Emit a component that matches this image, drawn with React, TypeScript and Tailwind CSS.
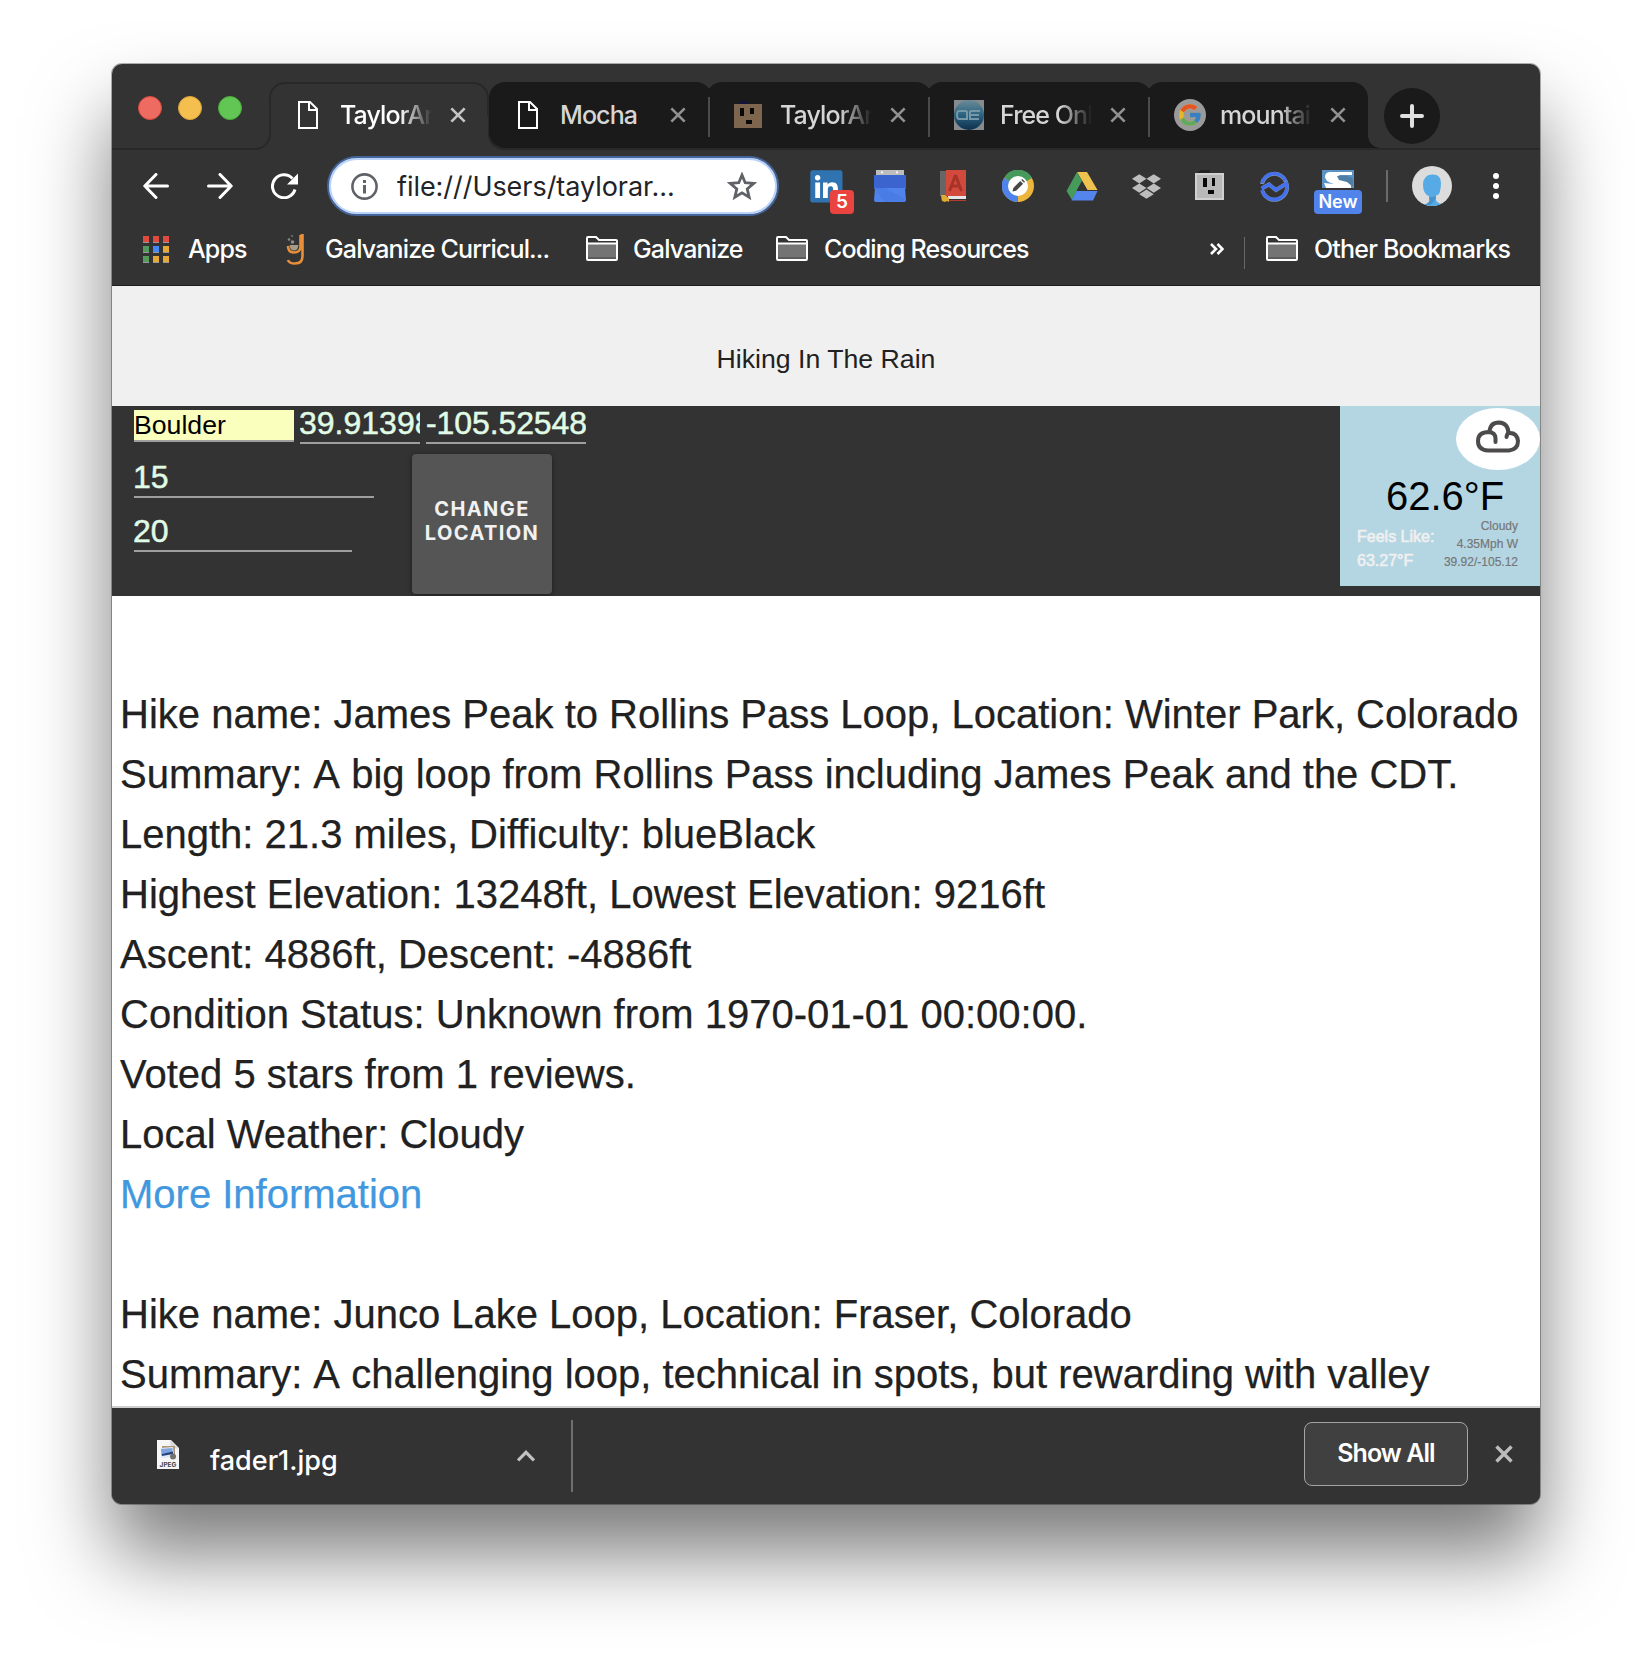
import React from "react";
import { FcGoogle } from "react-icons/fc";
import { FaDropbox, FaLinkedin } from "react-icons/fa";

function Cross({ size, color, w = 3.4 }: { size: number; color: string; w?: number }) {
  return (
    <svg width={size} height={size} viewBox="0 0 18 18" fill="none" stroke={color} strokeWidth={w}>
      <path d="M1.5 1.5 16.5 16.5M16.5 1.5 1.5 16.5" />
    </svg>
  );
}

function DocIcon() {
  return (
    <svg className="ml-1" width="20" height="28" viewBox="0 0 20 28" fill="none" stroke="#fff" strokeWidth="2">
      <path d="M1 1H12L19 8V27H1Z" />
      <path d="M11 1V9H19" />
    </svg>
  );
}

function BlockFace() {
  return (
    <svg width="30" height="30" viewBox="0 0 30 30" shapeRendering="crispEdges">
      <path d="M6 1h8v3H4z" fill="#14143a" />
      <rect x="0" y="4" width="28" height="24" fill="#7d654e" />
      <path d="M6 8h4v8H6zM16 8h4v6h-4zM12 20h6v4h-6z" fill="#080808" />
    </svg>
  );
}

function GlobeFavicon() {
  return (
    <svg width="30" height="30" viewBox="0 0 30 30">
      <defs>
        <linearGradient id="globe" x1="0" y1="0" x2="0" y2="1">
          <stop offset="0" stopColor="#6c8a98" />
          <stop offset=".5" stopColor="#2a6380" />
          <stop offset="1" stopColor="#102f4e" />
        </linearGradient>
      </defs>
      <rect width="30" height="30" fill="#858b8e" />
      <circle cx="15" cy="15" r="15" fill="url(#globe)" />
      <g fill="none" stroke="#7697a5" strokeWidth="2">
        <path d="M13 11H5Q3 11 3 15T5 19H13V11M16 11V19H25M16 15H25M16 11H26" />
      </g>
    </svg>
  );
}

function GoogleFavicon() {
  return (
    <span className="flex size-8 items-center justify-center rounded-full bg-[#9a9a9a]">
      <FcGoogle className="size-[26px] opacity-75" />
    </span>
  );
}

function TabTitle({ title, active }: { title: string; active?: boolean }) {
  return (
    <span
      className={
        "w-[92px] whitespace-nowrap text-[25px] font-medium leading-[34px] tracking-[-0.9px] " +
        (active ? "text-white " : "text-[#d6d6d6] ") +
        (title === "Mocha" ? "" : "[mask-image:linear-gradient(90deg,#000_65%,transparent_100%)]")
      }
    >
      {title}
    </span>
  );
}

function Tab({ title, icon, first, last }: { title: string; icon: React.ReactNode; first?: boolean; last?: boolean }) {
  return (
    <div className={"relative h-[66px] " + (last ? "w-[219px]" : "w-[220px]")}>
      <div
        className={
          "absolute inset-y-0 bg-[#1a1a1a] " +
          (first
            ? "left-0 -right-[3px] rounded-l-[16px] rounded-tr-[16px]"
            : last
              ? "-left-[3px] right-0 rounded-t-[16px]"
              : "-inset-x-[3px] rounded-t-[16px]")
        }
      />
      {!first && <div className="absolute -left-px top-[15px] h-10 w-0.5 bg-[#4b4b4b]" />}
      {last && (
        <div className="absolute -right-3 bottom-0 size-3 bg-[radial-gradient(circle_at_100%_0%,transparent_11.5px,#1a1a1a_12px)]" />
      )}
      <div className="relative flex h-full items-center pl-[25px]">
        <span className="flex w-[46px] items-center">{icon}</span>
        <TabTitle title={title} />
        <span className="ml-[18px]">
          <Cross size={16} color="#909090" w={3} />
        </span>
      </div>
    </div>
  );
}

function TabStrip() {
  return (
    <div className="relative flex h-[86px] shrink-0 items-start">
      <div className="absolute bottom-0 left-[390px] right-0 h-0.5 bg-[#282828]" />
      <div className="flex h-[86px] w-[157px] flex-col">
        <div className="flex h-[52px] items-end gap-4 pl-[26px] pt-8">
          <span className="size-6 shrink-0 translate-y-1 rounded-full border border-[#d8493f] bg-[#ed6b60]" />
          <span className="size-6 shrink-0 translate-y-1 rounded-full border border-[#dca33a] bg-[#f5bf4f]" />
          <span className="size-6 shrink-0 translate-y-1 rounded-full border border-[#4bab3c] bg-[#61c654]" />
        </div>
        <div className="h-[34px] w-[159px] rounded-br-[16px] border-b-2 border-r-2 border-[#282828]" />
      </div>
      <div className="relative mt-[18px] h-[66px] w-[220px]">
        <div className="absolute left-0 right-0 top-0 h-[34px] rounded-t-[16px] border-2 border-b-0 border-[#282828]" />
        <div className="absolute -right-4 bottom-[-2px] h-9 w-[17px] rounded-bl-[16px] border-b-2 border-l-2 border-[#282828]" />
        <div className="relative flex h-full items-center pl-[25px]">
          <span className="w-[46px]">
            <DocIcon />
          </span>
          <TabTitle title="TaylorAr" active />
          <span className="ml-[18px]">
            <Cross size={16} color="#c4c4c4" w={3} />
          </span>
        </div>
      </div>
      <div className="mt-[18px] flex">
        <Tab title="Mocha" icon={<DocIcon />} first />
        <Tab title="TaylorAr" icon={<BlockFace />} />
        <Tab title="Free Onl" icon={<GlobeFavicon />} />
        <Tab title="mountai" icon={<GoogleFavicon />} last />
      </div>
      <div className="ml-4 mt-6 flex size-14 items-center justify-center rounded-full bg-[#1a1a1a]">
        <svg width="24" height="24" viewBox="0 0 24 24" stroke="#e0e0e0" strokeWidth="4" strokeLinecap="round">
          <path d="M12 2V22M2 12H22" />
        </svg>
      </div>
    </div>
  );
}

function Extensions() {
  return (
    <div className="flex items-center gap-8">
      <span className="relative block size-8">
        <span className="absolute inset-1 bg-white" />
        <FaLinkedin className="absolute -left-[2.4px] -top-[2.4px] size-[36.8px] text-[#2f74b0]" />
        <span className="absolute left-5 top-5 flex h-6 w-6 items-center justify-center rounded-[4px] bg-[#ea4441] text-[19px] font-semibold leading-6 text-white">
          5
        </span>
      </span>
      <svg width="32" height="32" viewBox="0 0 32 32">
        <path d="M2 0h28v6H2z" fill="#bdbdbd" />
        <circle cx="8" cy="2.3" r="1.1" fill="#fff" />
        <circle cx="23" cy="2.3" r="1.1" fill="#fff" />
        <path d="M0 5h32v14H0z" fill="#3c64ce" />
        <path d="M1 18h30l1 12q0 2-2 2H2q-2 0-2-2z" fill="#5083ec" />
        <path d="M1 18h10l20 11v3H10z" fill="#4a7ce6" />
      </svg>
      <svg width="32" height="32" viewBox="0 0 32 32">
        <path d="M2 1h6v25H2z" fill="#666" />
        <path d="M8 0h20v26H8z" fill="#d14a3c" />
        <path d="M17.5 5 11.5 21M17.5 5 23.5 21M13.5 16H21.5" stroke="#a93328" strokeWidth="3" fill="none" />
        <path d="M10 26h18v3H10z" fill="#e6e6e6" />
        <path d="M3 27q0-1 2-1v4h23v1H5q-2-1-2-4z" fill="#b53b30" />
        <path d="M3 25h4l4 3v4l-2-1-2 1-3-1z" fill="#e0ac35" />
      </svg>
      <svg width="32" height="32" viewBox="0 0 32 32">
        <circle cx="16" cy="16" r="16" fill="#ecb63c" />
        <path d="M16 16 2 8A16 16 0 0 1 30 8Z" fill="#459a5c" />
        <path d="M16 16 2 8A16 16 0 0 0 16 32Z" fill="#4f83ec" />
        <circle cx="16" cy="16" r="10" fill="#fff" />
        <path d="m10.5 21.5.8-3.6 7-7 2.8 2.8-7 7z" fill="#484848" />
        <path d="m19.2 10 1-1 2.8 2.8-1 1z" fill="#484848" />
      </svg>
      <svg width="32" height="32" viewBox="0 0 32 32">
        <path d="M11 2H21L31.5 20H21.5Z" fill="#eec24e" />
        <path d="M11 2 16 11 6 30 .5 21Z" fill="#459a5c" />
        <path d="M10.5 21H31.5L27 30.5H5.5Z" fill="#5385ec" />
        <path d="M16 11 21.5 21H10.5Z" fill="#333" />
      </svg>
      <span className="flex size-8 items-center justify-center">
        <FaDropbox className="size-[29px] text-[#bdbdbd]" />
      </span>
      <svg width="32" height="32" viewBox="0 0 32 32" shapeRendering="crispEdges">
        <path d="M6 0h10v3H4z" fill="#222" />
        <rect x="1" y="3" width="29" height="27" fill="#d0d0d0" />
        <rect x="3" y="5" width="25" height="23" fill="#b8b8b8" />
        <path d="M9 8h4v9H9zM18 8h3v8h-3zM14 20h6v4h-6z" fill="#080808" />
      </svg>
      <svg width="32" height="32" viewBox="0 0 32 32" fill="none">
        <g stroke="#8394a8" strokeWidth="4">
          <path d="M4 14A12.5 12.5 0 0 1 28 12" />
          <path d="M3.8 18.5 11 14.5 18 20 28.5 13.5A12.5 12.5 0 0 1 4.5 21" />
        </g>
        <g stroke="#4270ee" strokeWidth="3.4">
          <path d="M4 13A12.5 12.5 0 0 1 27.5 11" />
          <path d="M3.5 18.5 11 14.5 18 20 28.5 13.5A12.5 12.5 0 0 1 4 20" />
        </g>
      </svg>
      <span className="relative block size-8">
        <svg width="32" height="18" viewBox="0 0 32 18">
          <rect width="32" height="18" fill="#5b93c5" />
          <path d="M8 2H30V5H18Q15 6 19 8L29 13V18H4L2 13L12 14Q2 11 3 6 4 2 8 2Z" fill="#fff" />
          <path d="M15 6Q26 4 31 9V17L25 12 17 10Z" fill="#4e7da8" />
        </svg>
        <span className="absolute -left-2 top-5 flex h-6 w-12 items-center justify-center rounded-[4px] bg-[#5084ea] text-[18px] font-semibold leading-6 text-white">
          New
        </span>
      </span>
    </div>
  );
}

function Toolbar() {
  return (
    <div className="flex h-[72px] shrink-0 items-center pl-[31px]">
      <svg width="26" height="26" viewBox="0 0 26 26" fill="none" stroke="#fff" strokeWidth="3" strokeLinecap="round" strokeLinejoin="round">
        <path d="M13 1.5 1.8 13 13 24.5M2 13H24.5" />
      </svg>
      <svg className="ml-[38px]" width="26" height="26" viewBox="0 0 26 26" fill="none" stroke="#fff" strokeWidth="3" strokeLinecap="round" strokeLinejoin="round">
        <path d="M13 1.5 24.2 13 13 24.5M1.5 13H24" />
      </svg>
      <svg className="ml-[38px]" width="28" height="26" viewBox="0 0 28 26" fill="none">
        <path d="M24 16.5A11.5 11.5 0 1 1 21.5 5.5" stroke="#fff" strokeWidth="3" />
        <path d="M27 .5V11.5H16Z" fill="#fff" />
      </svg>
      <div className="ml-[28px] flex h-[60px] w-[452px] items-center rounded-full border-2 border-[#45659a] bg-white pl-[22px] shadow-[inset_0_0_0_2px_#b9d3fb]">
        <svg width="27" height="27" viewBox="0 0 27 27" fill="none" stroke="#5f6368" strokeWidth="2.6">
          <circle cx="13.5" cy="13.5" r="12.1" />
          <path d="M13.5 12V20.5M13.5 7V10" strokeWidth="3" />
        </svg>
        <span className="ml-[19px] w-[284px] translate-y-px whitespace-nowrap text-[27px] leading-9 tracking-[-0.05px] text-[#222326]">
          file:///Users/taylorar...
        </span>
        <svg className="ml-[46px]" width="30" height="29" viewBox="0 0 30 29" fill="none" stroke="#5f6368" strokeWidth="2.8">
          <path d="M15 3 18.2 10.7 26.7 11.4 20.2 16.9 22.2 25.3 15 20.8 7.8 25.3 9.8 16.9 3.3 11.4 11.8 10.7Z" />
        </svg>
      </div>
      <div className="ml-[31px]">
        <Extensions />
      </div>
      <div className="ml-8 h-8 w-0.5 bg-[#6b6b6b]" />
      <svg className="ml-6" width="40" height="40" viewBox="0 0 40 40">
        <clipPath id="avatar">
          <circle cx="20" cy="20" r="20" />
        </clipPath>
        <circle cx="20" cy="20" r="20" fill="#dcdcdc" />
        <path
          clipPath="url(#avatar)"
          d="M20 8.5Q29 8 29 17Q29 22 27.500 27Q26.500 29 24 29.500V34Q25 37 30 38L28 41H13L17 36V30Q11 28 11 19Q11 9 20 8.5Z"
          fill="#56abe6"
        />
        <path clipPath="url(#avatar)" d="M24 30Q20 32 17 31L18 35Q15 38 11 39H18Q23 36 24 30Z" fill="#4593cb" />
      </svg>
      <svg className="ml-[41px]" width="6" height="26" viewBox="0 0 6 26" fill="#fff">
        <circle cx="3" cy="3" r="3" />
        <circle cx="3" cy="13" r="3" />
        <circle cx="3" cy="23" r="3" />
      </svg>
    </div>
  );
}

function Folder() {
  return (
    <svg width="32" height="26" viewBox="0 0 32 26">
      <path d="M1 2Q1 1 2 1H10L13 4H30Q31 4 31 5V23Q31 24 30 24H2Q1 24 1 23Z" fill="#333" stroke="#fff" strokeWidth="2" />
      <path d="M2 8H30V23H2Z" fill="#747474" />
      <path d="M2 21H30V23H2Z" fill="#5c5c5c" />
      <path d="M1 7.5H31" stroke="#fff" strokeWidth="2" />
    </svg>
  );
}

const APP_COLORS = ["#e04a3f", "#e04a3f", "#e04a3f", "#559a5d", "#4688f1", "#e8a838", "#559a5d", "#e8a838", "#e8a838"];

function Bookmarks() {
  return (
    <div className="flex h-[64px] shrink-0 items-center whitespace-nowrap pb-2.5 pl-[31px] text-[25px] font-medium leading-[34px] text-white shadow-[inset_0_-1px_0_#1d1d1d] [&>*]:shrink-0">
      <div className="grid grid-cols-[6px_6px_6px] gap-x-1 gap-y-[3px]">
        {APP_COLORS.map((c, i) => (
          <span key={i} className="h-[7px] w-1.5 border-b border-[#999]" style={{ backgroundColor: c }} />
        ))}
      </div>
      <span className="ml-[19px] w-[58px] tracking-[-0.9px]">Apps</span>
      <svg className="ml-[40px]" width="18" height="31" viewBox="0 0 18 31" fill="none">
        <path d="M2 12Q2 18.5 8 18.5T14.5 13V2L16.5 1V22Q16.5 29.5 9 29.5Q3 29.5 2 26" stroke="#e98f39" strokeWidth="2.6" />
        <path d="M3.5 11H12.5Q12 16.5 8 16.5T3.5 11Z" fill="#a89b86" />
        <circle cx="6.5" cy="8" r="1.8" fill="#8e8e8e" />
        <circle cx="3" cy="5.5" r="1.3" fill="#7e8c87" />
        <circle cx="6" cy="2" r="1" fill="#777" />
      </svg>
      <span className="ml-[21px] w-[226px] tracking-[-0.85px]">Galvanize Curricul...</span>
      <span className="ml-[35px]">
        <Folder />
      </span>
      <span className="ml-[15px] w-[110px] tracking-[-0.85px]">Galvanize</span>
      <span className="ml-[33px]">
        <Folder />
      </span>
      <span className="ml-4 tracking-[-0.85px]">Coding Resources</span>
      <svg className="ml-auto" width="14" height="12" viewBox="0 0 14 12" fill="none" stroke="#fff" strokeWidth="2.6">
        <path d="M1 1 6 6 1 11M7.5 1 12.5 6 7.5 11" />
      </svg>
      <span className="ml-[20px] h-8 w-px translate-y-1 bg-[#686868]" />
      <span className="ml-[21px]">
        <Folder />
      </span>
      <span className="ml-4 mr-[29px] w-[197px] tracking-[-0.8px]">Other Bookmarks</span>
    </div>
  );
}

const FIELD =
  "rounded-none border-b-2 border-[#9e9e9e] bg-transparent p-0 text-[32px] text-[#e0fbe6] outline-none [-webkit-text-stroke:0.5px_#e0fbe6]";

function SearchBar() {
  return (
    <div className="flex h-[190px] shrink-0 items-start justify-between bg-[#333] pl-[22px] font-['Liberation_Sans',Arial,sans-serif]">
      <form>
        <div className="flex items-end gap-1.5">
          <input
            readOnly
            value="Boulder"
            className="mb-0.5 h-8 w-[160px] border-b-2 border-[#9e9e9e] bg-[#faffbd] p-0 text-[26.667px] text-black outline-none"
          />
          <input readOnly value="39.913981" className={"h-[38px] w-[120px] leading-[34px] -indent-px pb-0.5! " + FIELD} />
          <input readOnly value="-105.52548" className={"h-[38px] w-[160px] leading-[34px] pb-0.5! tracking-[-0.1px] " + FIELD} />
        </div>
        <div className="flex">
          <div className="flex w-[278px] flex-col gap-3.5 pt-3.5">
            <input readOnly value="15" className={"h-10 w-[240px] leading-9 -indent-px " + FIELD} />
            <input readOnly value="20" className={"h-10 w-[218px] leading-9 -indent-px " + FIELD} />
          </div>
          <button
            type="button"
            className="mt-2.5 size-[140px] rounded-[4px] bg-[#555] font-['Inter',sans-serif] text-[20px] font-bold leading-6 tracking-[1.4px] text-[#f1f1f1] shadow-[0_1px_5px_rgba(0,0,0,0.45)]"
          >
            <span className="block -translate-y-[3px]">
              CHANGE
              <br />
              LOCATION
            </span>
          </button>
        </div>
      </form>
      <div className="h-[180px] w-[200px] bg-[#b4d6e3]">
        <div className="ml-auto flex h-[64px] w-[84px] pt-0.5">
          <div className="flex h-[62px] w-[84px] items-center justify-center rounded-[50%] bg-white">
            <svg className="-mt-1" width="44" height="34" viewBox="0 0 44 34" fill="none" stroke="#4d4a4b" strokeWidth="4" strokeLinecap="round">
              <path d="M19.5 22V18Q19 12.5 13 12Q2 12 2 21Q2 30 12 30.5H33Q42 29.5 42 21Q41 12.5 33 13Q31 13.5 30.5 17" />
              <path d="M13.5 12Q14 2.5 23 2.5Q32 3 32.5 13" />
            </svg>
          </div>
        </div>
        <div className="ml-[46px] mt-1.5 text-[40px] leading-10 text-black">62.6°F</div>
        <div className="flex justify-between pl-[17px] pr-[22px]">
          <div className="mt-[9px] text-[16px] leading-6 text-[#f0f0f0] [-webkit-text-stroke:0.6px_#f0f0f0]">
            Feels Like:
            <br />
            63.27°F
          </div>
          <div className="mt-px text-right text-[12px] leading-[18px] text-[#777] [-webkit-text-stroke:0.2px_#777]">
            Cloudy
            <br />
            4.35Mph W
            <br />
            39.92/-105.12
          </div>
        </div>
      </div>
    </div>
  );
}

const FIRST_HIKE: React.ReactNode[] = [
  "Hike name: James Peak to Rollins Pass Loop, Location: Winter Park, Colorado",
  <>
    Summary: <span className="inline-block">A</span> big loop from Rollins Pass including James Peak and the CDT.
  </>,
  "Length: 21.3 miles, Difficulty: blueBlack",
  "Highest Elevation: 13248ft, Lowest Elevation: 9216ft",
  "Ascent: 4886ft, Descent: -4886ft",
  "Condition Status: Unknown from 1970-01-01 00:00:00.",
  "Voted 5 stars from 1 reviews.",
  "Local Weather: Cloudy",
];

const SECOND_HIKE: React.ReactNode[] = [
  "Hike name: Junco Lake Loop, Location: Fraser, Colorado",
  <>
    Summary: <span className="inline-block">A</span> challenging loop, technical in spots, but rewarding with valley
  </>,
];

function Hikes() {
  return (
    <div className="flex-1 overflow-hidden whitespace-nowrap bg-white pl-2 pt-[88px] font-['Liberation_Sans',Arial,sans-serif] text-[40px] leading-[60px] text-[#212121] [-webkit-text-stroke:0.25px]">
      {FIRST_HIKE.map((line, i) => (
        <p key={i}>{line}</p>
      ))}
      <p className="mb-[60px] text-[#4198de]">More Information</p>
      {SECOND_HIKE.map((line, i) => (
        <p key={i}>{line}</p>
      ))}
    </div>
  );
}

function Downloads() {
  return (
    <div className="flex h-[98px] shrink-0 items-center border-t-2 border-[#cfcfcf] bg-[#333] pb-1 pl-[45px] text-white">
      <svg width="22" height="29" viewBox="0 0 22 29">
        <path d="M0 0H14L22 8V29H0Z" fill="#f6f6f6" />
        <path d="M13 0 22 9 14 7Z" fill="#d6d6d6" />
        <path d="M5 6H18V16H5Z" fill="#b09478" />
        <path d="M3.5 8 16 7 17 17 4.5 18Z" fill="#dfe9f7" />
        <path d="M4 9 15.5 8V12L4.5 14Z" fill="#7ea3de" />
        <path d="M4.5 14 16 11.5V14L5 16Z" fill="#25427e" />
        <circle cx="16" cy="16.5" r="3" fill="#75736e" />
        <text x="11" y="26.5" textAnchor="middle" fontSize="6.5" fontWeight="700" fill="#444" fontFamily="Inter">
          JPEG
        </text>
      </svg>
      <span className="ml-[31px] w-[130px] translate-y-[7px] whitespace-nowrap text-[27px] font-medium leading-9">fader1.jpg</span>
      <svg className="ml-[177px] translate-y-[2px]" width="18" height="12" viewBox="0 0 18 12" fill="none" stroke="#c2c2c2" strokeWidth="3.2">
        <path d="M1 10.5 9 2.3 17 10.5" />
      </svg>
      <span className="ml-9 h-[72px] w-0.5 translate-y-[2px] bg-[#6f6f6f]" />
      <button type="button" className="ml-auto flex h-16 w-[164px] items-center justify-center rounded-lg border border-[#a5a5a5] bg-[#404040] text-[25px] font-semibold tracking-[-0.95px] text-white">
        Show All
      </button>
      <span className="ml-[27px] mr-[27px]">
        <Cross size={18} color="#bdbdbd" />
      </span>
    </div>
  );
}

export default function App() {
  return (
    <div className="h-[1664px] w-[1652px] overflow-hidden bg-white pl-28 pt-16">
      <div className="flex h-[1440px] w-[1428px] flex-col overflow-hidden rounded-[10px] bg-[#333] font-['Inter',sans-serif] shadow-[0_0_0_1px_rgba(0,0,0,0.3),0_50px_80px_rgba(0,0,0,0.52)]">
        <TabStrip />
        <Toolbar />
        <Bookmarks />
        <header className="flex h-[120px] shrink-0 items-center justify-center bg-[#f0f0f0] pt-[26px] font-['Liberation_Sans',Arial,sans-serif] text-[26.667px] text-[#212121]">
          Hiking In The Rain
        </header>
        <SearchBar />
        <Hikes />
        <Downloads />
      </div>
    </div>
  );
}
